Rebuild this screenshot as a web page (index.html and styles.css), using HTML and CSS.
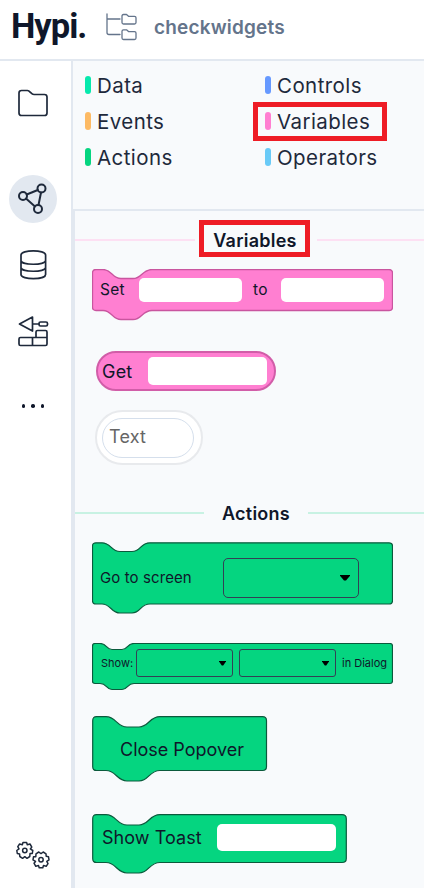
FILE: index.html
```html
<!DOCTYPE html>
<html lang="en">
<head>
<meta charset="utf-8">
<title>checkwidgets</title>
<link rel="stylesheet" href="styles.css">
</head>
<body>
<header class="topbar">
  <div class="brand">Hypi.</div>
  <svg class="tree" width="32" height="30" viewBox="0 0 32 30"><path d="M1 1V19.500Q1 21.500 3 21.500H14M1 6H14"/><path d="M16 3Q16 1.500 17.500 1.500H20.500L22.500 3.300H28.500Q30 3.300 30 4.800V9.500Q30 11 28.500 11H17.500Q16 11 16 9.500ZM16 18.300Q16 16.800 17.500 16.800H20.500L22.500 18.600H28.500Q30 18.600 30 20.100V25Q30 26.500 28.500 26.500H17.500Q16 26.500 16 25Z"/></svg>
  <div class="project">checkwidgets</div>
</header>
<div class="body">
  <nav class="side">
    <a class="item folder"><svg width="32" height="30" viewBox="0 0 32 30"><path d="M2 5Q2 2.500 4.500 2.500H10.500C13 2.500 14 6.500 17 6.500H27.500Q30 6.500 30 9V25Q30 27.500 27.500 27.500H4.500Q2 27.500 2 25Z"/></svg></a>
    <a class="item active"><svg width="32" height="32" viewBox="0 0 32 32"><circle cx="24.500" cy="5.500" r="4"/><circle cx="6" cy="13" r="4"/><circle cx="21" cy="26" r="4"/><path d="M9.700 11.500L20.800 7M9 15.600L18 23.400M24 9.500L21.500 22"/></svg></a>
    <a class="item"><svg width="32" height="32" viewBox="0 0 32 32"><path d="M4 6C4 .5 28.600 .5 28.600 6V25.500C28.600 31 4 31 4 25.500ZM4 11.500C4 16.500 28.600 16.500 28.600 11.500M4 18.500C4 23.500 28.600 23.500 28.600 18.500"/></svg></a>
    <a class="item bricks"><svg width="32" height="32" viewBox="0 0 32 32"><path d="M15.500 2L2.500 9L15.500 16ZM15.500 9H22"/><rect x="22" y="7" width="8.500" height="4" rx="1.500"/><path d="M19 22.500V17Q19 15.500 20.500 15.500H28.500Q30 15.500 30 17V29Q30 30.500 28.500 30.500H3.500Q2 30.500 2 29V24Q2 22.500 3.500 22.500H30M15.500 22.500V30.500"/></svg></a>
    <a class="item dots"><i></i><i></i><i></i></a>
    <a class="item settings"><svg width="34" height="28" viewBox="0 0 34 28"><defs><path id="gear" d="M-1.800 -8H1.800L2.500 -5.800L5.200 -6.500L7 -3.400L5.500 -1.600L8 0L7.500 3L5.200 3L5 6L2.200 7.800L0 6.200L-2.200 7.800L-5 6L-5.200 3.500L-7.500 3L-8 0L-5.800 -1.600L-7 -3.800L-5.200 -6.500L-2.500 -5.800Z"/></defs><use href="#gear" x="8.800" y="9.500"/><circle cx="8.800" cy="9.500" r="2.200"/><use href="#gear" transform="translate(25 18.800) rotate(180)"/><circle cx="25" cy="18.800" r="2.200"/></svg></a>
  </nav>
  <main class="panel">
    <section class="legend">
      <div class="cat"><i class="chip data"></i><span>Data</span></div>
      <div class="cat"><i class="chip controls"></i><span>Controls</span></div>
      <div class="cat"><i class="chip events"></i><span>Events</span></div>
      <div class="cat marked"><i class="chip variables"></i><span>Variables</span></div>
      <div class="cat"><i class="chip actions"></i><span>Actions</span></div>
      <div class="cat"><i class="chip operators"></i><span>Operators</span></div>
    </section>
    <section class="blocks">
      <h2 class="heading pinkline"><span class="title boxed">Variables</span></h2>
      <div class="block pink set">
        <svg class="shape" width="301" height="52"><path d="M4 .5H11C20 .5 20 9.500 29 9.500H41C50 9.500 50 .5 60 .5H297Q300.500 .5 300.500 4V38Q300.500 41.500 297 41.500H60C50 41.500 50 50.500 41 50.500H29C20 50.500 20 41.500 11 41.500H4Q.5 41.500 .5 38V4Q.5 .5 4 .5Z"/></svg>
        <span>Set</span><i class="field"></i><span>to</span><i class="field"></i>
      </div>
      <div class="pill"><span>Get</span><i class="field"></i></div>
      <div class="textpill"><div class="inner">Text</div></div>
      <h2 class="heading greenline"><span class="title">Actions</span></h2>
      <div class="block green goto">
        <svg class="shape" width="301" height="72"><path d="M4 .8H10C19 .8 19 9.500 28 9.500H40C49 9.500 48 .8 58 .8H297Q300.500 .8 300.500 4V58.500Q300.500 62 297 62H58C48 62 49 71 40 71H28C19 71 19 62 10 62H4Q.5 62 .5 58.500V4Q.5 .8 4 .8Z"/></svg>
        <span>Go to screen</span><i class="select"></i>
      </div>
      <div class="block green dialog">
        <svg class="shape" width="301" height="48"><path d="M3 .5H8C15 .5 14 6.500 20 6.500H30C36 6.500 35 .5 42 .5H298Q300.500 .5 300.500 3V38Q300.500 40.500 298 40.500H42C35 40.500 36 46.500 30 46.500H20C14 46.500 15 40.500 8 40.500H3Q.5 40.500 .5 38V3Q.5 .5 3 .5Z"/></svg>
        <span>Show:</span><i class="select"></i><i class="select"></i><span>in Dialog</span>
      </div>
      <div class="block green close">
        <svg class="shape" width="176" height="66"><path d="M4.500 .7H14C24 .7 25 11 35 11H47C57 11 57 .7 68 .7H170.500Q174.500 .7 174.500 4.700V50.500Q174.500 54.500 170.500 54.500H68C57 54.500 57 65 47 65H35C25 65 24 54.500 14 54.500H4.500Q.7 54.500 .7 50.500V4.700Q.7 .7 4.500 .7Z"/></svg>
        <span>Close Popover</span>
      </div>
      <div class="block green toast">
        <svg class="shape" width="256" height="60"><path d="M4.500 .7H14C24 .7 25 11 35 11H47C57 11 57 .7 68 .7H250Q254.300 .7 254.300 4.700V44.500Q254.300 48.500 250 48.500H68C57 48.500 57 59 47 59H35C25 59 24 48.500 14 48.500H4.500Q.7 48.500 .7 44.500V4.700Q.7 .7 4.500 .7Z"/></svg>
        <span>Show Toast</span><i class="field"></i>
      </div>
    </section>
  </main>
</div>
</body>
</html>
```
FILE: styles.css
```css
*, *::before, *::after { box-sizing: border-box; }
body { margin: 0; height: 888px; overflow: hidden; background: #fff; color: #1e293b; font-family: Inter, "Liberation Sans", sans-serif; }
svg { display: block; fill: none; stroke-linejoin: round; stroke-linecap: round; }
i { display: block; font-style: normal; }

.topbar { height: 61px; display: flex; align-items: center; border-bottom: 2px solid #e2e8f0; padding: 0 0 4px 11px; }
.brand { width: 95px; padding-bottom: 3px; font-family: Roboto, Inter, sans-serif; font-size: 34.500px; line-height: 40px; font-weight: 700; letter-spacing: -1px; color: #0f172a; }
.tree { stroke: #64748b; stroke-width: 1.3; }
.project { margin-left: 16px; font-size: 19px; font-weight: 600; color: #64748b; letter-spacing: .18px; }

.body { display: flex; height: 827px; }
.side { width: 73px; display: flex; flex-direction: column; align-items: center; padding: 18px 5px 16px 0; border-right: 2px solid #e2e8f0; }
.item { width: 48px; height: 48px; margin-bottom: 18px; display: flex; align-items: center; justify-content: center; border-radius: 50%; stroke: #1e293b; stroke-width: 1.7; }
.folder { margin-bottom: 48px; }
.active { background: #e2e8f0; stroke-width: 2; }
.bricks { margin-bottom: 27px; }
.dots { gap: 6px; }
.dots i { width: 3.500px; height: 3.500px; border-radius: 50%; background: #0f172a; }
.settings { margin: auto 0 -7px; stroke-width: 1.5; }

.panel { flex: 1; background: #f8fafc; padding-left: 1px; }
.legend { height: 148px; padding: 6px 0 0 11px; display: grid; grid-template-columns: 180px 1fr; grid-auto-rows: 36px; }
.cat { display: flex; align-items: center; gap: 6px; position: relative; font-size: 20.500px; line-height: 26px; letter-spacing: .42px; }
.cat span { padding-top: 1px; }
.chip { width: 6px; height: 18px; border-radius: 3px; }
.data { background: #06e9ad; }
.controls { background: #6699ff; }
.events { background: #fdba64; }
.variables { background: #ff7fd1; }
.actions { background: #05d580; }
.operators { background: #69caf7; }
.marked::after { content: ""; position: absolute; left: -12px; top: -1px; width: 134px; height: 39px; border: 5px solid #ee1c25; }

.blocks { border-top: 2px solid #e2e8f0; border-left: 2px solid #e2e8f0; height: 679px; margin-left: -1px; padding-left: 17px; display: flex; flex-direction: column; align-items: flex-start; }
.heading { margin: 17px 0 0 -17px; align-self: stretch; height: 24px; display: flex; align-items: center; font-size: 18px; line-height: 22px; font-weight: 600; letter-spacing: .25px; color: #0f172a; }
.heading::before, .heading::after { content: ""; height: 2px; flex: 1; }
.pinkline::before, .pinkline::after { background: #fde0f3; }
.greenline::before, .greenline::after { background: #c8f2e3; }
.pinkline::before { flex: 0 0 120px; }
.greenline::before { flex: 0 0 129px; }
.title { width: 122px; text-align: center; position: relative; padding-top: 2px; }
.greenline .title { width: 104px; }
.boxed { padding-right: 2px; }
.boxed::after { content: ""; position: absolute; left: 4px; top: -8px; width: 111px; height: 37px; border: 5px solid #ee1c25; }

.block, .pill { position: relative; display: grid; align-items: center; color: #0f172a; white-space: nowrap; }
.shape { position: absolute; left: 0; top: 0; z-index: 0; }
.block > span, .block > i { position: relative; z-index: 1; }
.pink .shape { fill: #ff7fd1; stroke: #c9559f; stroke-width: 1.3; }
.green .shape { fill: #05d580; stroke: #0b5a3c; stroke-width: 1.2; }
.field { background: #fff; border-radius: 5px; }

.set { margin-top: 17px; width: 301px; height: 42px; grid-template-columns: 39px 103px 39px 103px; padding: 0 0 1px 8px; font-size: 15.500px; letter-spacing: .3px; }
.set .field { height: 24px; }
.set > span { padding-bottom: 1px; }
.set > span:nth-of-type(2) { padding-left: 11px; }
.pill { margin: 40px 0 0 4px; width: 180px; height: 40px; border: 2px solid #d15da8; border-radius: 20px; background: #ff7fd1; grid-template-columns: 46px 119px; padding-left: 4px; font-size: 18px; letter-spacing: .2px; }
.pill .field { height: 28px; }
.textpill { margin: 19px 0 0 3px; width: 108px; height: 55px; border: 2px solid #e8eaed; border-radius: 28px; background: #fff; padding: 6px 0 0 5px; }
.inner { width: 92px; height: 40px; border: 1px solid #d5dfec; border-radius: 20px; padding-left: 6px; line-height: 36px; font-size: 18px; letter-spacing: .2px; color: #666; }
.greenline { margin-top: 36px; }
.goto { margin-top: 17px; width: 301px; height: 72px; padding: 0 0 1px 8px; grid-template-columns: 123px 136px; font-size: 15px; letter-spacing: .1px; }
.select { height: 40px; border: 1.400px solid #334155; border-radius: 5px; display: flex; align-items: center; justify-content: flex-end; padding-right: 8px; }
.select::after { content: ""; width: 10px; height: 6px; background: #000; clip-path: polygon(0 0, 100% 0, 100% 20%, 60% 100%, 40% 100%, 0 20%); }
.dialog { margin-top: 29px; width: 301px; height: 41px; padding: 0 0 1px 9px; grid-template-columns: 35px 97px 97px auto; font-size: 11px; }
.dialog .select { height: 28px; border-width: 1px; border-radius: 3px; padding-right: 6px; }
.dialog .select + .select { margin-left: 6px; margin-right: -6px; }
.dialog .select::after { width: 7px; height: 5px; }
.dialog span:last-child { padding-left: 12px; }
.close { margin-top: 32px; width: 176px; height: 66px; padding-left: 28px; font-size: 18px; letter-spacing: 0; }
.toast { margin-top: 32px; width: 256px; height: 48px; padding: 0 0 1px 10px; grid-template-columns: 115px 119px; font-size: 18px; letter-spacing: .05px; }
.toast .field { height: 27px; }
```
